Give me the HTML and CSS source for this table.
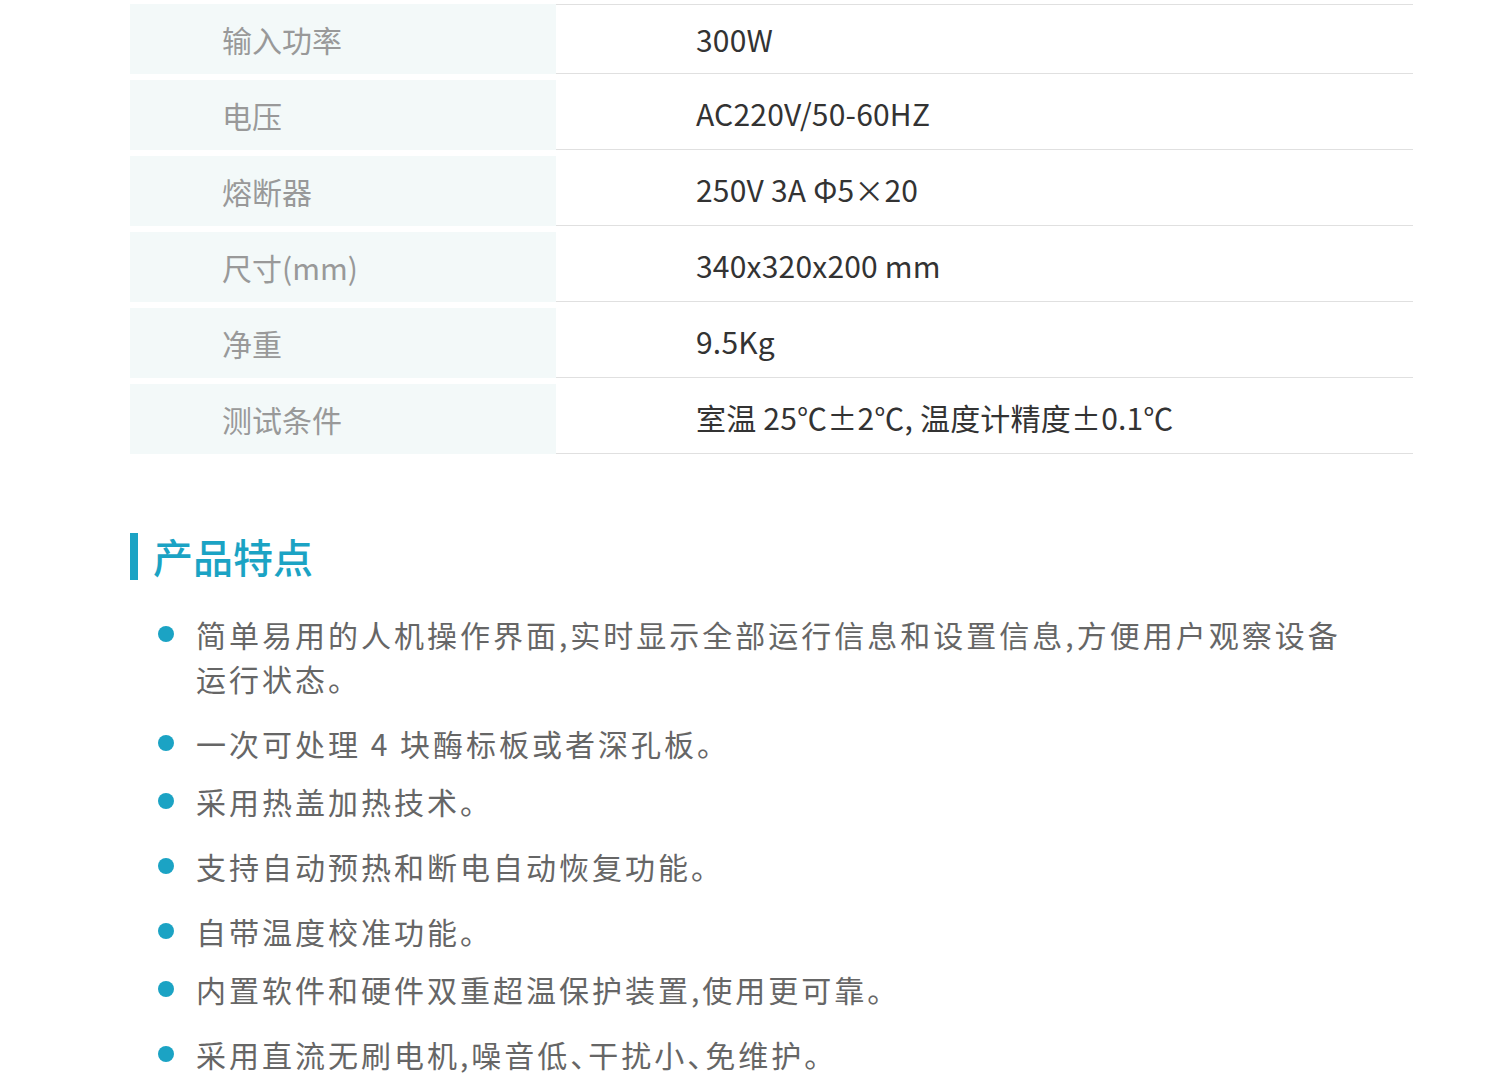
FILE: index.html
```html
<!DOCTYPE html>
<html lang="zh-CN">
<head>
  <meta charset="UTF-8">
  <meta name="viewport" content="width=device-width, initial-scale=1.0">
  <title>产品参数</title>
  <link rel="stylesheet" href="styles.css">
</head>
<body>
  <div class="wrap">
    <div class="spec-table">
      <div class="spec-row first">
        <div class="spec-name">输入功率</div>
        <div class="spec-value">300W</div>
      </div>
      <div class="spec-row">
        <div class="spec-name">电压</div>
        <div class="spec-value">AC220V/50-60HZ</div>
      </div>
      <div class="spec-row">
        <div class="spec-name">熔断器</div>
        <div class="spec-value">250V 3A Φ5×20</div>
      </div>
      <div class="spec-row">
        <div class="spec-name">尺寸(mm)</div>
        <div class="spec-value">340x320x200 mm</div>
      </div>
      <div class="spec-row">
        <div class="spec-name">净重</div>
        <div class="spec-value">9.5Kg</div>
      </div>
      <div class="spec-row">
        <div class="spec-name">测试条件</div>
        <div class="spec-value">室温 25℃±2℃, 温度计精度±0.1℃</div>
      </div>
    </div>

    <h2 class="title">产品特点</h2>

    <ul class="features">
      <li>简单易用的人机操作界面,实时显示全部运行信息和设置信息,方便用户观察设备运行状态。</li>
      <li>一次可处理 4 块酶标板或者深孔板。</li>
      <li class="tight">采用热盖加热技术。</li>
      <li>支持自动预热和断电自动恢复功能。</li>
      <li>自带温度校准功能。</li>
      <li class="tight">内置软件和硬件双重超温保护装置,使用更可靠。</li>
      <li>采用直流无刷电机,噪音低、干扰小、免维护。</li>
    </ul>
  </div>
</body>
</html>
```

FILE: styles.css
```css
html, body {
  margin: 0;
  padding: 0;
  font-family: "Noto Sans CJK SC", "Noto Sans", sans-serif;
}

body {
  background: #fff;
  color: #333;
}

.wrap {
  width: 1283px;
  margin-left: 130px;
  padding-top: 4px;
}

/* 参数表 */
.spec-table {
  display: flex;
  flex-direction: column;
}

.spec-row {
  display: grid;
  grid-template-columns: 426px 1fr;
  height: 76px;
}

.spec-row.first {
  height: 70px;
}

.spec-name {
  margin-top: 6px;
  background: #f3f9f9;
  padding-left: 92px;
  display: flex;
  align-items: center;
  font-size: 30px;
  color: #999;
}

.spec-value {
  border-bottom: 1px solid #e0e0e0;
  padding-left: 140px;
  padding-top: 2px;
  display: flex;
  align-items: center;
  font-size: 30px;
  letter-spacing: 0.2px;
  color: #333;
}

.first .spec-name {
  margin-top: 0;
}

.first .spec-value {
  border-top: 1px solid #e0e0e0;
  padding-top: 0;
}

/* 产品特点 */
.title {
  margin: 79px 0 0;
  border-left: 8px solid #1ba3c4;
  padding-left: 15px;
  height: 47px;
  line-height: 47px;
  font-size: 40px;
  font-weight: 500;
  color: #1ba3c4;
}

.features {
  list-style: none;
  margin: 32px 0 0;
  padding: 0 0 0 28px;
  width: 1200px;
}

.features li {
  position: relative;
  padding-left: 38px;
  margin-top: 21px;
  font-size: 30px;
  line-height: 44px;
  letter-spacing: 3px;
  font-feature-settings: "halt";
  color: #666;
}

.features li:first-child {
  margin-top: 0;
}

.features li.tight {
  margin-top: 14px;
}

.features li::before {
  content: '';
  position: absolute;
  left: 0;
  top: 14px;
  width: 16px;
  height: 16px;
  border-radius: 50%;
  background: #1ba3c4;
}
```
